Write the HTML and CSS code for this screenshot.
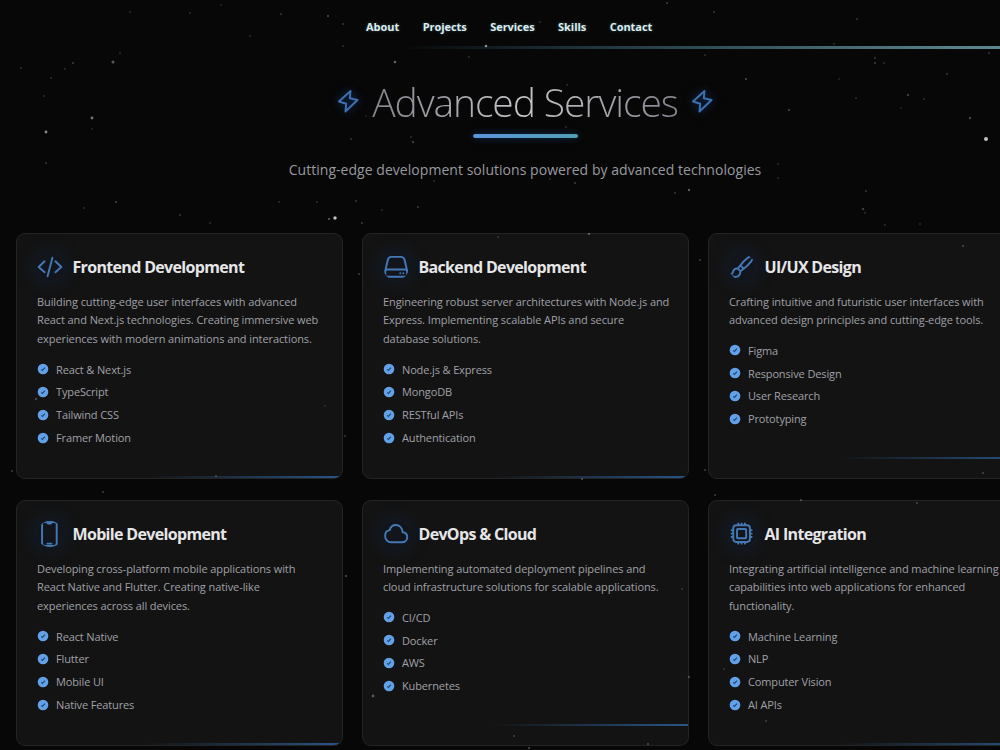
FILE: index.html
```html
<!DOCTYPE html>
<html lang="en">
<head>
    <meta charset="UTF-8">
    <meta name="viewport" content="width=device-width, initial-scale=1.0">
    <title>Advanced Services</title>
    <link rel="stylesheet" href="styles.css">
</head>
<body>
    <!-- shared icons -->
    <svg class="sprite" aria-hidden="true">
        <symbol id="flash" viewBox="0 0 24 24">
            <path d="M14.500 2 3 12.500l7.200 2.200L9.500 22.500 21.500 11l-7.700-1.700z"/>
        </symbol>
        <symbol id="check" viewBox="0 0 512 512">
            <circle cx="256" cy="256" r="228" fill="#62a0e8"/>
            <path d="M180 270l50 45L340 200" fill="none" stroke="#1d4878" stroke-width="50"/>
        </symbol>
    </svg>

    <svg class="stars" id="stars" width="1000" height="750"></svg>

    <div class="page">
        <header>
            <nav>
                <a href="#about">About</a>
                <a href="#projects">Projects</a>
                <a href="#services">Services</a>
                <a href="#skills">Skills</a>
                <a href="#contact">Contact</a>
            </nav>
            <div class="nav-line"></div>
        </header>

        <section class="intro">
            <div class="heading">
                <svg class="bolt"><use href="#flash"/></svg>
                <h1>Advanced Services</h1>
                <svg class="bolt"><use href="#flash"/></svg>
            </div>
            <div class="underline"></div>
            <p class="subtitle">Cutting-edge development solutions powered by advanced technologies</p>
        </section>

        <main class="grid">
            <article class="card">
                <div class="card-head">
                    <svg class="icon" viewBox="0 0 512 512"><path d="M150 358L32 256l118-112M362 358l118-102-118-112M304 72l-96 368"/></svg>
                    <h2>Frontend Development</h2>
                </div>
                <p>Building cutting-edge user interfaces with advanced<br>React and Next.js technologies. Creating immersive web<br>experiences with modern animations and interactions.</p>
                <ul>
                    <li><svg class="tick"><use href="#check"/></svg>React &amp; Next.js</li>
                    <li><svg class="tick"><use href="#check"/></svg>TypeScript</li>
                    <li><svg class="tick"><use href="#check"/></svg>Tailwind CSS</li>
                    <li><svg class="tick"><use href="#check"/></svg>Framer Motion</li>
                </ul>
                <div class="card-line"></div>
            </article>

            <article class="card">
                <div class="card-head">
                    <svg class="icon" viewBox="0 0 512 512"><path d="M44 336L96 112q12-56 68-56h192q56 0 68 56l52 224M88 306h344q44 0 44 44v48q0 50-50 50H94q-50 0-50-50v-48q0-44 44-44zM340 380h.1M400 380h.1"/></svg>
                    <h2>Backend Development</h2>
                </div>
                <p>Engineering robust server architectures with Node.js and<br>Express. Implementing scalable APIs and secure<br>database solutions.</p>
                <ul>
                    <li><svg class="tick"><use href="#check"/></svg>Node.js &amp; Express</li>
                    <li><svg class="tick"><use href="#check"/></svg>MongoDB</li>
                    <li><svg class="tick"><use href="#check"/></svg>RESTful APIs</li>
                    <li><svg class="tick"><use href="#check"/></svg>Authentication</li>
                </ul>
                <div class="card-line"></div>
            </article>

            <article class="card">
                <div class="card-head">
                    <svg class="icon" viewBox="0 0 512 512"><path d="M480 30c14 60-90 190-190 260l-66-66C300 120 420 20 480 30zM224 224l-50 64 50 50 66-48M174 288c-44-10-84 14-92 56-6 34-22 52-52 60 40 72 190 76 194-66"/></svg>
                    <h2>UI/UX Design</h2>
                </div>
                <p>Crafting intuitive and futuristic user interfaces with<br>advanced design principles and cutting-edge tools.</p>
                <ul>
                    <li><svg class="tick"><use href="#check"/></svg>Figma</li>
                    <li><svg class="tick"><use href="#check"/></svg>Responsive Design</li>
                    <li><svg class="tick"><use href="#check"/></svg>User Research</li>
                    <li><svg class="tick"><use href="#check"/></svg>Prototyping</li>
                </ul>
                <div class="card-line"></div>
            </article>

            <article class="card">
                <div class="card-head">
                    <svg class="icon" viewBox="0 0 512 512"><rect x="100" y="20" width="288" height="472" rx="48"/><path d="M176 20h18c8 0 8 28 22 28h56c14 0 14-28 22-28h18M204 446h80"/></svg>
                    <h2>Mobile Development</h2>
                </div>
                <p>Developing cross-platform mobile applications with<br>React Native and Flutter. Creating native-like<br>experiences across all devices.</p>
                <ul>
                    <li><svg class="tick"><use href="#check"/></svg>React Native</li>
                    <li><svg class="tick"><use href="#check"/></svg>Flutter</li>
                    <li><svg class="tick"><use href="#check"/></svg>Mobile UI</li>
                    <li><svg class="tick"><use href="#check"/></svg>Native Features</li>
                </ul>
                <div class="card-line"></div>
            </article>

            <article class="card">
                <div class="card-head">
                    <svg class="icon" viewBox="0 0 512 512"><path d="M386 222c-8.890-89.540-64-144-134-144-66 0-106 48-120 102-52 8-90 50-90 108 0 76 50 132 112 132h220c60 0 104-38 104-100 0-60-44-94-92-98z"/></svg>
                    <h2>DevOps &amp; Cloud</h2>
                </div>
                <p>Implementing automated deployment pipelines and<br>cloud infrastructure solutions for scalable applications.</p>
                <ul>
                    <li><svg class="tick"><use href="#check"/></svg>CI/CD</li>
                    <li><svg class="tick"><use href="#check"/></svg>Docker</li>
                    <li><svg class="tick"><use href="#check"/></svg>AWS</li>
                    <li><svg class="tick"><use href="#check"/></svg>Kubernetes</li>
                </ul>
                <div class="card-line"></div>
            </article>

            <article class="card">
                <div class="card-head">
                    <svg class="icon" viewBox="0 0 512 512"><rect x="84" y="84" width="328" height="328" rx="56"/><rect x="158" y="158" width="180" height="180" rx="12"/><path d="M248 80V50M314 80V50M182 80V50M248 446v-30M314 446v-30M182 446v-30M416 248h30M416 314h30M416 182h30M50 248h30M50 314h30M50 182h30"/></svg>
                    <h2>AI Integration</h2>
                </div>
                <p>Integrating artificial intelligence and machine learning<br>capabilities into web applications for enhanced<br>functionality.</p>
                <ul>
                    <li><svg class="tick"><use href="#check"/></svg>Machine Learning</li>
                    <li><svg class="tick"><use href="#check"/></svg>NLP</li>
                    <li><svg class="tick"><use href="#check"/></svg>Computer Vision</li>
                    <li><svg class="tick"><use href="#check"/></svg>AI APIs</li>
                </ul>
                <div class="card-line"></div>
            </article>
        </main>
    </div>
    <script src="stars.js"></script>
</body>
</html>
```
FILE: styles.css
```css
body {
    font-family: "Open Sans", "Noto Sans", sans-serif;
    margin: 0;
    padding: 0;
    height: 750px;
    overflow: hidden;
    background-color: #070707;
    color: #a0a1a8;
}

.sprite {
    display: none;
}

.stars {
    position: absolute;
    top: 0;
    left: 0;
    z-index: 1;
    opacity: 0.75;
    pointer-events: none;
}

/* page is a little wider than the window, the last column is cut off */
.page {
    width: 1050px;
}

header {
    height: 50px;
}

nav {
    display: flex;
    gap: 23.5px;
    height: 46px;
    padding-left: 366px;
    align-items: center;
    box-sizing: border-box;
}

nav a {
    color: #dcedef;
    font-size: 11px;
    font-weight: bold;
    letter-spacing: -0.05px;
    line-height: 15px;
    padding-top: 7px;
    text-decoration: none;
    text-shadow: 0 0 3px rgba(130, 200, 220, 0.4);
}

.nav-line {
    height: 3px;
    margin-left: 400px;
    background: linear-gradient(90deg, transparent, #1d333c 28%, #56808a 85%, #5f8f98);
}

.intro {
    height: 183px;
    text-align: center;
}

.heading {
    display: flex;
    justify-content: center;
    align-items: center;
    gap: 12px;
    height: 84px;
    padding-top: 20px;
    box-sizing: border-box;
}

h1 {
    margin: 0;
    font-size: 39px;
    font-weight: 300;
    line-height: 50px;
    letter-spacing: -1.1px;
    background: linear-gradient(90deg, #83838c, #c6c6ca 50%, #83838c);
    -webkit-background-clip: text;
    background-clip: text;
    color: transparent;
}

.bolt {
    width: 24px;
    height: 26px;
    margin-bottom: 2px;
    fill: none;
    stroke: #3d70b0;
    stroke-width: 2;
    stroke-linejoin: round;
    filter: drop-shadow(0 0 4px rgba(30, 90, 180, 0.6));
}

.underline {
    width: 105px;
    height: 4px;
    margin: 0 auto;
    border-radius: 2px;
    background: linear-gradient(90deg, #5b93dc, #509fb3);
    box-shadow: 0 0 7px rgba(30, 90, 170, 0.5);
}

.subtitle {
    margin: 21px 0 0;
    font-size: 14px;
    line-height: 22px;
    letter-spacing: 0.04px;
    color: #98999f;
}

.grid {
    display: grid;
    grid-template-columns: repeat(3, 326.6px);
    grid-auto-rows: 246px;
    gap: 21px 19.4px;
    padding-left: 16px;
}

.card {
    box-sizing: border-box;
    overflow: hidden;
    padding: 20px 0 0 20px;
    border: 1px solid #242425;
    border-radius: 9px;
    background-color: #131313;
}

.card-head {
    display: flex;
    align-items: center;
    gap: 9.5px;
    height: 26px;
}

.icon {
    flex: none;
    width: 26px;
    height: 26px;
    fill: none;
    stroke: #4478b5;
    stroke-width: 38;
    stroke-linecap: round;
    stroke-linejoin: round;
    border-radius: 50%;
    background-color: rgba(20, 50, 95, 0.12);
    box-shadow: 0 0 18px 4px rgba(20, 50, 95, 0.3);
}

h2 {
    margin: 0;
    font-size: 16px;
    line-height: 24px;
    letter-spacing: -0.67px;
    color: #e6e6e8;
}

.card p {
    margin: 12.5px 0 9px;
    font-size: 11px;
    line-height: 18.75px;
    letter-spacing: -0.09px;
    white-space: nowrap;
}

.card ul {
    margin: 0;
    padding: 0;
    list-style: none;
}

.card li {
    display: flex;
    align-items: center;
    gap: 7px;
    height: 22.8px;
    font-size: 11px;
    letter-spacing: -0.13px;
}

.tick {
    width: 12px;
    height: 12px;
}

.card-line {
    height: 2px;
    margin: 27.3px 0 0 -20px;
    background: linear-gradient(90deg, transparent 40%, #285688);
}
```
FILE: stars.js
```js
// x, y, radius, opacity
const stars = [
    [130, 12, 1, .2], [190, 13, 1, .2], [221, 5, 1, .15], [281, 14, 1, .25], [328, 16, 1, .4],
    [250, 36, 1, .2], [343, 24, 1, .25], [113, 62, 1.5, .45], [120, 53, 1, .2], [73, 63, 1, .3],
    [65, 69, 1, .2], [21, 68, 1, .2], [51, 78, 1, .2], [44, 96, 1, .2], [92, 118, 1.4, .6],
    [92, 129, 1, .15], [46, 132, 1.4, .7], [46, 163, 1, .25], [116, 202, 1, .35], [84, 208, 1, .2],
    [180, 215, 1, .25], [210, 223, 1, .2], [279, 202, 1, .2], [317, 202, 1, .2], [335, 218, 1.7, 1],
    [329, 219, 1, .5], [382, 210, 1, .2], [418, 207, 1, .3], [356, 201, 1, .25], [395, 62, 1.3, .5],
    [343, 46, 1, .2], [486, 46, 1.3, .7], [469, 57, 1, .2], [413, 142, 1, .4], [411, 137, 1, .2],
    [351, 139, 1, .25], [366, 116, 1, .15], [434, 181, 1, .2], [550, 179, 1, .2], [575, 183, 1, .3],
    [566, 127, 1, .2], [567, 85, 1, .2], [540, 22, 1, .2], [667, 3, 1, .3], [714, 12, 1, .25],
    [857, 19, 1, .25], [834, 44, 1, .2], [705, 55, 1, .2], [746, 79, 1, .4], [789, 110, 1, .4],
    [875, 58, 1, .25], [875, 63, 1, .3], [884, 63, 1, .2], [947, 74, 1, .25], [989, 53, 1, .25],
    [908, 95, 1.2, .3], [924, 99, 1, .2], [856, 98, 1, .2], [839, 79, 1, .15], [901, 108, 1, .15],
    [970, 118, 1.2, .35], [986, 139, 2, 1], [778, 164, 1, .2], [778, 178, 1, .2], [689, 190, 1.2, .45],
    [675, 193, 1, .25], [866, 191, 1, .25], [863, 209, 1.2, .3], [865, 213, 1, .2], [885, 225, 1, .2],
    [920, 224, 1, .2], [589, 234, 1, .5], [362, 223, 1, .3], [359, 274, 1, .3], [498, 237, 1, .2],
    [963, 246, 1, .35], [700, 260, 1, .3], [36, 399, 1.2, .3], [12, 471, 1, .3], [345, 436, 1, .25],
    [216, 476, 1, .3], [103, 492, 1, .3], [346, 576, 1.2, .3], [582, 479, 1, .4], [373, 696, 1.4, .4],
    [514, 736, 1, .3], [689, 677, 1.2, .3], [648, 744, 1, .35], [529, 748, 1.2, .3], [682, 589, 1, .2],
    [715, 495, 1, .3], [801, 500, 1, .4], [917, 503, 1, .3], [766, 721, 1, .25], [724, 669, 1, .2],
    [705, 470, 1, .3], [983, 473, 1, .3], [325, 406, 1, .15]
];

const sky = document.getElementById("stars");

stars.forEach(([x, y, r, opacity]) => {
    const star = document.createElementNS("http://www.w3.org/2000/svg", "circle");
    star.setAttribute("cx", x);
    star.setAttribute("cy", y);
    star.setAttribute("r", r);
    star.setAttribute("fill", "#fff");
    star.setAttribute("fill-opacity", opacity);
    sky.appendChild(star);
});
```
